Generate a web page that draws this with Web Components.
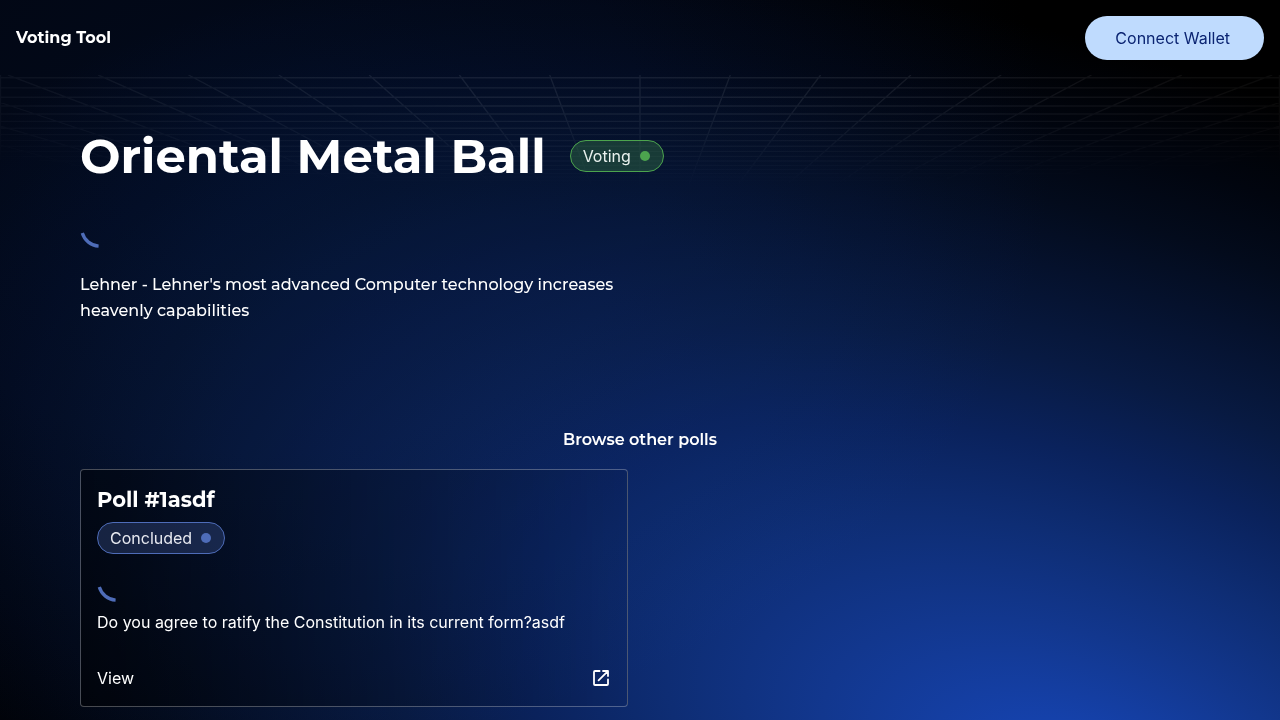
<!DOCTYPE html>
<html lang="en">
<head>
<meta charset="utf-8">
<meta name="viewport" content="width=device-width, initial-scale=1">
<title>Voting Tool</title>
<style>
  body {
    margin: 0;
    background: #000;
    color: #fff;
    font: 16px/24px Inter, sans-serif;
    --display: Montserrat, Inter, sans-serif;
  }
</style>
</head>
<body>
<voting-app>
  <app-header slot="header">Voting Tool</app-header>
  <poll-detail slot="main" status="Voting">
    <span slot="name">Oriental Metal Ball</span>
    Lehner - Lehner's most advanced Computer technology increases heavenly capabilities
  </poll-detail>
  <poll-browser slot="main">
    <poll-card status="Concluded">
      <span slot="name">Poll #1asdf</span>
      Do you agree to ratify the Constitution in its current form?asdf
    </poll-card>
  </poll-browser>
</voting-app>

<script>
  class Base extends HTMLElement {
    constructor() {
      super();
      this.attachShadow({ mode: 'open' }).innerHTML = this.render();
    }
  }

  customElements.define('grid-floor', class extends Base {
    // Ceiling grid in one-point perspective, vanishing point at (640, 240).
    render() {
      let d = '';
      for (let n = 0; n < 24; n++) {
        const y = (240 - 1 / (0.004214 + 0.00019 * n)).toFixed(1);
        d += `M0 ${y}H1280`;
      }
      for (let k = -14; k <= 14; k++) {
        d += `M${640 + k * 90.3} 0L${640 + k * 45.15} 120`;
      }
      return `
        <style>
          :host { display: block; height: 120px; pointer-events: none;
            -webkit-mask-image: radial-gradient(ellipse 84% 116px at 50% 0, #000 25%, transparent);
            mask-image: radial-gradient(ellipse 84% 116px at 50% 0, #000 25%, transparent); }
          svg { display: block; width: 100%; height: 100%; }
          path { fill: none; stroke: #fff; stroke-opacity: .08; stroke-width: 1.4; }
        </style>
        <svg viewBox="0 0 1280 120" preserveAspectRatio="none" aria-hidden="true"><path d="${d}M.5 0V120M1279.5 0V120"/></svg>`;
    }
  });

  customElements.define('voting-app', class extends Base {
    render() {
      return `
        <style>
          :host { display: block; position: relative; min-height: 100vh; overflow: hidden; box-sizing: border-box; background: #000; }
          .glow { position: absolute; left: 85%; top: 110%; width: 260vw; height: 200vh;
            transform: translate(-50%, -50%) rotate(22deg);
            background: radial-gradient(ellipse 91vw 87vh at center,
              #1644b4, #1541aa 10%, #12378e 24%, #0e2d74 38%, #0a225c 51%, #081a42 64%,
              #05112c 78%, #030b1c 88%, #01050f 99%, #000 114%); }
          .haze { position: absolute; inset: 0; mix-blend-mode: screen;
            background: radial-gradient(ellipse 62% 82% at 20% 22%, #020a1c, #020714 50%, #000); }
          grid-floor { position: absolute; inset: 75px 0 auto; }
          main { position: relative; padding: 52px 80px 13px; }
        </style>
        <div class="glow"></div>
        <div class="haze"></div>
        <grid-floor></grid-floor>
        <slot name="header"></slot>
        <main><slot name="main"></slot></main>`;
    }
  });

  customElements.define('app-header', class extends Base {
    render() {
      return `
        <style>
          :host { display: block; position: relative; }
          header { display: flex; align-items: center; justify-content: space-between; padding: 16px; }
          a { color: inherit; text-decoration: none; font: 700 16px/24px var(--display); }
          button { border: 0; border-radius: 22px; height: 44px; padding: 0 34px 0 30px;
            background: #bfdbfe; color: #0b2472; font: 16px/24px Inter, sans-serif; cursor: pointer; }
        </style>
        <header><a href="#"><slot></slot></a><button type="button">Connect Wallet</button></header>`;
    }
  });

  customElements.define('status-chip', class extends Base {
    render() {
      return `
        <style>
          :host { --tone: 76,164,78; --ink: #e9f1ee; --fill: .28;
            display: inline-flex; align-items: center; gap: 9px; box-sizing: border-box; height: 32px;
            padding: 0 13px 0 12px; border: 1px solid rgb(var(--tone)); border-radius: 16px;
            background: rgba(var(--tone), var(--fill)); color: var(--ink); }
          :host([tone=done]) { --tone: 78,108,184; --ink: #e6e8ef; }
          i { width: 10px; height: 10px; border-radius: 50%; background: rgb(var(--tone)); }
        </style>
        <slot></slot><i></i>`;
    }
  });

  customElements.define('load-spinner', class extends Base {
    render() {
      return `
        <style>
          :host { display: block; width: 40px; height: 40px; }
          svg { display: block; width: 40px; height: 40px; }
        </style>
        <svg viewBox="0 0 40 40" role="progressbar" aria-label="Loading">
          <path d="M18.6 38.2A18.4 18.4 0 0 1 2.3 25" fill="none" stroke="#4e6cb8" stroke-width="3.3"/>
        </svg>`;
    }
  });

  customElements.define('poll-detail', class extends Base {
    render() {
      return `
        <style>
          :host { display: block; }
          .title { display: flex; align-items: center; gap: 24px; }
          h1 { margin: 0; font: 700 48px/56px var(--display); }
          load-spinner { margin: 24px 0; }
          p { margin: 0; width: calc(50% - 12px); font: 500 16px/26px var(--display); }
        </style>
        <div class="title"><h1><slot name="name"></slot></h1><status-chip>${this.getAttribute('status')}</status-chip></div>
        <load-spinner></load-spinner>
        <p><slot></slot></p>`;
    }
  });

  customElements.define('poll-browser', class extends Base {
    render() {
      return `
        <style>
          :host { display: block; margin-top: 104px; }
          h2 { margin: 0 0 17px; text-align: center; font: 600 16px/24px var(--display); }
          div { display: grid; grid-template-columns: 1fr 1fr; gap: 24px; }
        </style>
        <h2>Browse other polls</h2>
        <div><slot></slot></div>`;
    }
  });

  customElements.define('poll-card', class extends Base {
    render() {
      return `
        <style>
          :host { display: block; border: 1px solid rgba(255,255,255,.28); border-radius: 4px; padding: 16px;
            background: linear-gradient(90deg, rgba(0,0,0,.45), rgba(0,0,0,.05)); }
          h3 { margin: 0 0 8px; font: 700 21px/28px var(--display); }
          load-spinner { margin: 8px 0; }
          p { margin: 0; }
          a { display: flex; justify-content: space-between; align-items: center; margin-top: 32px;
            color: inherit; text-decoration: none; }
          svg { width: 20px; height: 20px; }
        </style>
        <h3><slot name="name"></slot></h3>
        <status-chip tone="done">${this.getAttribute('status')}</status-chip>
        <load-spinner></load-spinner>
        <p><slot></slot></p>
        <a href="#">View
          <svg viewBox="0 0 20 20" fill="none" stroke="#fff" stroke-width="1.8" stroke-linecap="round" stroke-linejoin="round" aria-hidden="true">
            <path d="M8.6 3H4Q3 3 3 4V16Q3 17 4 17H16Q17 17 17 16V11.4M12 3H17V8M16.4 3.6L7.6 12.4"/>
          </svg>
        </a>`;
    }
  });
</script>
</body>
</html>
